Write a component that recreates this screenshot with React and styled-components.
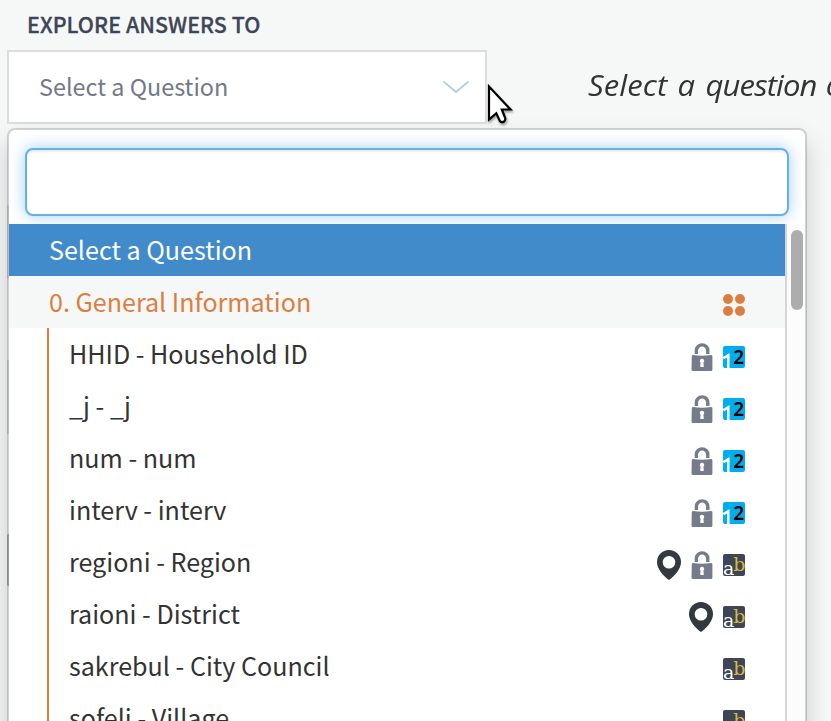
import React from "react";
import styled, { createGlobalStyle } from "styled-components";

const Global = createGlobalStyle`
  * { box-sizing: border-box; }
  html, body { margin: 0; background: #f6f8f7; overflow: hidden; }
  body { font-family: "Noto Sans CJK SC", "Noto Sans", sans-serif; color: #333; }
`;

const Page = styled.main`
  position: relative;
  width: 831px;
  height: 721px;
  overflow: hidden;
  background: #f6f8f7;
`;

const Heading = styled.h1`
  margin: 0;
  height: 50px;
  padding-left: 27px;
  font-size: 21.4px;
  font-weight: 500;
  line-height: 48px;
  letter-spacing: 0.05px;
  color: #3d4557;
  -webkit-text-stroke: 0.3px #3d4557;
  white-space: nowrap;
`;

const TopBar = styled.div`
  display: flex;
  align-items: center;
  gap: 101px;
  padding-left: 7px;
`;

const SelectBox = styled.div`
  flex: none;
  display: flex;
  align-items: center;
  justify-content: space-between;
  width: 480px;
  height: 74px;
  padding: 0 15px 0 30px;
  border: 2px solid #dcdddd;
  background: #fff;
  font-size: 23.4px;
  color: #727988;
`;

const SelectValue = styled.span`
  padding-bottom: 2px;
`;

const Hint = styled.p`
  margin: 0;
  padding-bottom: 4px;
  flex: none;
  font: italic 400 30px/70px "Open Sans", sans-serif;
  white-space: nowrap;
  color: #333;
`;

const HintText = styled.span`
  display: inline-block;
  transform: scaleX(1.035);
  transform-origin: 0 50%;
  word-spacing: 2px;
`;

const HintWord = styled.span`
  letter-spacing: ${(p) => p.$tracking}px;
`;

const Fields = styled.div`
  display: flex;
  flex-direction: column;
  padding: 81px 0 0 7px;
`;

const Field = styled.div`
  height: ${(p) => p.$height}px;
  width: 480px;
  margin-bottom: ${(p) => p.$after || 0}px;
  border: 2px solid ${(p) => p.$edge};
  border-radius: ${(p) => p.$radius || 0}px;
`;

const Dropdown = styled.section`
  position: absolute;
  left: 7px;
  top: 128px;
  width: 800px;
  height: 640px;
  border: 2px solid rgba(0, 0, 0, 0.15);
  border-radius: 8px;
  background: #fff;
  background-clip: padding-box;
  box-shadow: 0 12px 24px rgba(0, 0, 0, 0.175);
`;

const Search = styled.input`
  display: block;
  width: 764px;
  height: 68px;
  margin: 18px 0 8px 16px;
  padding: 0 24px;
  border: 2px solid #66afe9;
  border-radius: 8px;
  outline: none;
  background: #fff;
  font: inherit;
  font-size: 25px;
  box-shadow: inset 0 2px 2px rgba(0, 0, 0, 0.075), 0 0 16px rgba(102, 175, 233, 0.6);
`;

const Scroller = styled.div`
  display: flex;
  height: 520px;
`;

const List = styled.div`
  width: 778px;
  border-right: 2px solid #d5d6d6;
`;

const Track = styled.div`
  width: 18px;
  padding: 6px 2px 0 4px;
  background: #fcfcfc;
`;

const Thumb = styled.div`
  height: 80px;
  border-radius: 6px;
  background: #adadad;
`;

const Row = styled.div`
  display: flex;
  align-items: flex-start;
  justify-content: space-between;
  height: 52px;
  padding: 0 40px;
  font-size: 25.1px;
  line-height: 50px;
  white-space: nowrap;
`;

const SelectedRow = styled(Row)`
  background: #428bca;
  color: #fff;
`;

const GroupRow = styled(Row)`
  background: #f6f8f7;
  color: #dd7e41;
`;

const Question = styled(Row)`
  margin-left: 38px;
  padding-left: 20px;
  border-left: 2px solid #dd7e41;
`;

const Icons = styled.span`
  display: flex;
  align-items: center;
  gap: 10px;
  height: 52px;
  padding-top: 6px;
`;

const Icon = styled.svg`
  display: block;
  flex: none;
`;

const Cursor = styled(Icon)`
  position: absolute;
  left: 486px;
  top: 82px;
  filter: drop-shadow(1px 2px 1px rgba(0, 0, 0, 0.35));
`;

const Chevron = () => (
  <Icon width="28" height="14" viewBox="0 0 28 14" fill="none">
    <path d="M1.5 1.5 14 12 26.5 1.5" stroke="#b5d2db" strokeWidth="2" />
  </Icon>
);

const Dots = () => (
  <Icon width="22" height="22" viewBox="0 0 22 22" fill="#dd7e41">
    <circle cx="5" cy="5" r="5" />
    <circle cx="17" cy="5" r="5" />
    <circle cx="5" cy="17" r="5" />
    <circle cx="17" cy="17" r="5" />
  </Icon>
);

const Lock = () => (
  <Icon width="22" height="28" viewBox="0 0 22 28">
    <path d="M5.4 11V7.6a5.7 5.7 0 0 1 11.4 0V11" fill="none" stroke="#757b8b" strokeWidth="3.4" />
    <path d="M.8 13Q.8 12 2 12Q11 13.4 20 12Q21.4 12 21.4 13.3V26.5Q21.4 28 20 28H2Q.5 28 .5 26.5Z" fill="#757b8b" />
    <path d="M11 15.8a2.2 2.2 0 0 1 1.4 3.9L12.8 24H9.2L9.6 19.7A2.2 2.2 0 0 1 11 15.8Z" fill="#fff" />
  </Icon>
);

const Pin = () => (
  <Icon width="24" height="30" viewBox="0 0 24 30">
    <path
      fillRule="evenodd"
      fill="#33393e"
      d="M12 0a12 12 0 0 1 12 12.2C24 19 17.5 26 12 30 6.5 26 0 19 0 12.2A12 12 0 0 1 12 0ZM12 6a6.3 6.3 0 1 0 0 12.6A6.3 6.3 0 0 0 12 6Z"
    />
  </Icon>
);

const Numeric = () => (
  <Icon width="22" height="22" viewBox="0 0 22 22">
    <rect width="22" height="22" rx="2" fill="#00aeef" />
    <path d="M.4 12.3 5.3 9.3V22" fill="none" stroke="#fff" strokeWidth="2.5" />
    <text x="10.2" y="17.7" fontFamily="Noto Sans" fontWeight="600" fontSize="19" fill="#000">2</text>
  </Icon>
);

const Textual = () => (
  <Icon width="22" height="22" viewBox="0 0 22 22">
    <rect width="22" height="22" rx="2" fill="#3d4557" />
    <text x="0" y="21" fontFamily="DejaVu Serif" fontSize="19" fill="#fff">a</text>
    <text x="10.3" y="17" fontFamily="DejaVu Serif" fontSize="19" fill="#d6b93a">b</text>
  </Icon>
);

const glyphs = { pin: Pin, lock: Lock, numeric: Numeric, textual: Textual };

const questions = [
  ["HHID - Household ID", ["lock", "numeric"]],
  ["_j - _j", ["lock", "numeric"]],
  ["num - num", ["lock", "numeric"]],
  ["interv - interv", ["lock", "numeric"]],
  ["regioni - Region", ["pin", "lock", "textual"]],
  ["raioni - District", ["pin", "textual"]],
  ["sakrebul - City Council", ["textual"]],
  ["sofeli - Village", ["textual"]],
];

export default function App() {
  return (
    <>
      <Global />
      <Page>
        <Heading>EXPLORE ANSWERS TO</Heading>
        <TopBar>
          <SelectBox>
            <SelectValue>Select a Question</SelectValue>
            <Chevron />
          </SelectBox>
          <Hint>
            <HintText>
              <HintWord $tracking={0.1}>Select a </HintWord>
              <HintWord $tracking={-0.85}>question o</HintWord>
            </HintText>
          </Hint>
        </TopBar>
        <Fields>
          <Field $height={74} $edge="#dcdddd" $after={81} />
          <Field $height={74} $edge="#dcdddd" $after={99} />
          <Field $height={54} $edge="#b5b3b3" $radius={4} />
        </Fields>
        <Dropdown>
          <Search aria-label="Search questions" />
          <Scroller>
            <List>
              <SelectedRow>Select a Question</SelectedRow>
              <GroupRow>
                <span>0. General Information</span>
                <Icons><Dots /></Icons>
              </GroupRow>
              {questions.map(([label, icons]) => (
                <Question key={label}>
                  <span>{label}</span>
                  <Icons>
                    {icons.map((name) => {
                      const Glyph = glyphs[name];
                      return <Glyph key={name} />;
                    })}
                  </Icons>
                </Question>
              ))}
            </List>
            <Track><Thumb /></Track>
          </Scroller>
        </Dropdown>
        <Cursor width="32" height="44" viewBox="0 0 32 44">
          <path
            d="M3 4.5V37.5L10.3 31.2 13.8 39Q15.5 41 18 39.5 20 38 19 35.5L15.8 27.5H24.5Z"
            fill="#fff"
            stroke="#000"
            strokeWidth="2.2"
          />
        </Cursor>
      </Page>
    </>
  );
}
